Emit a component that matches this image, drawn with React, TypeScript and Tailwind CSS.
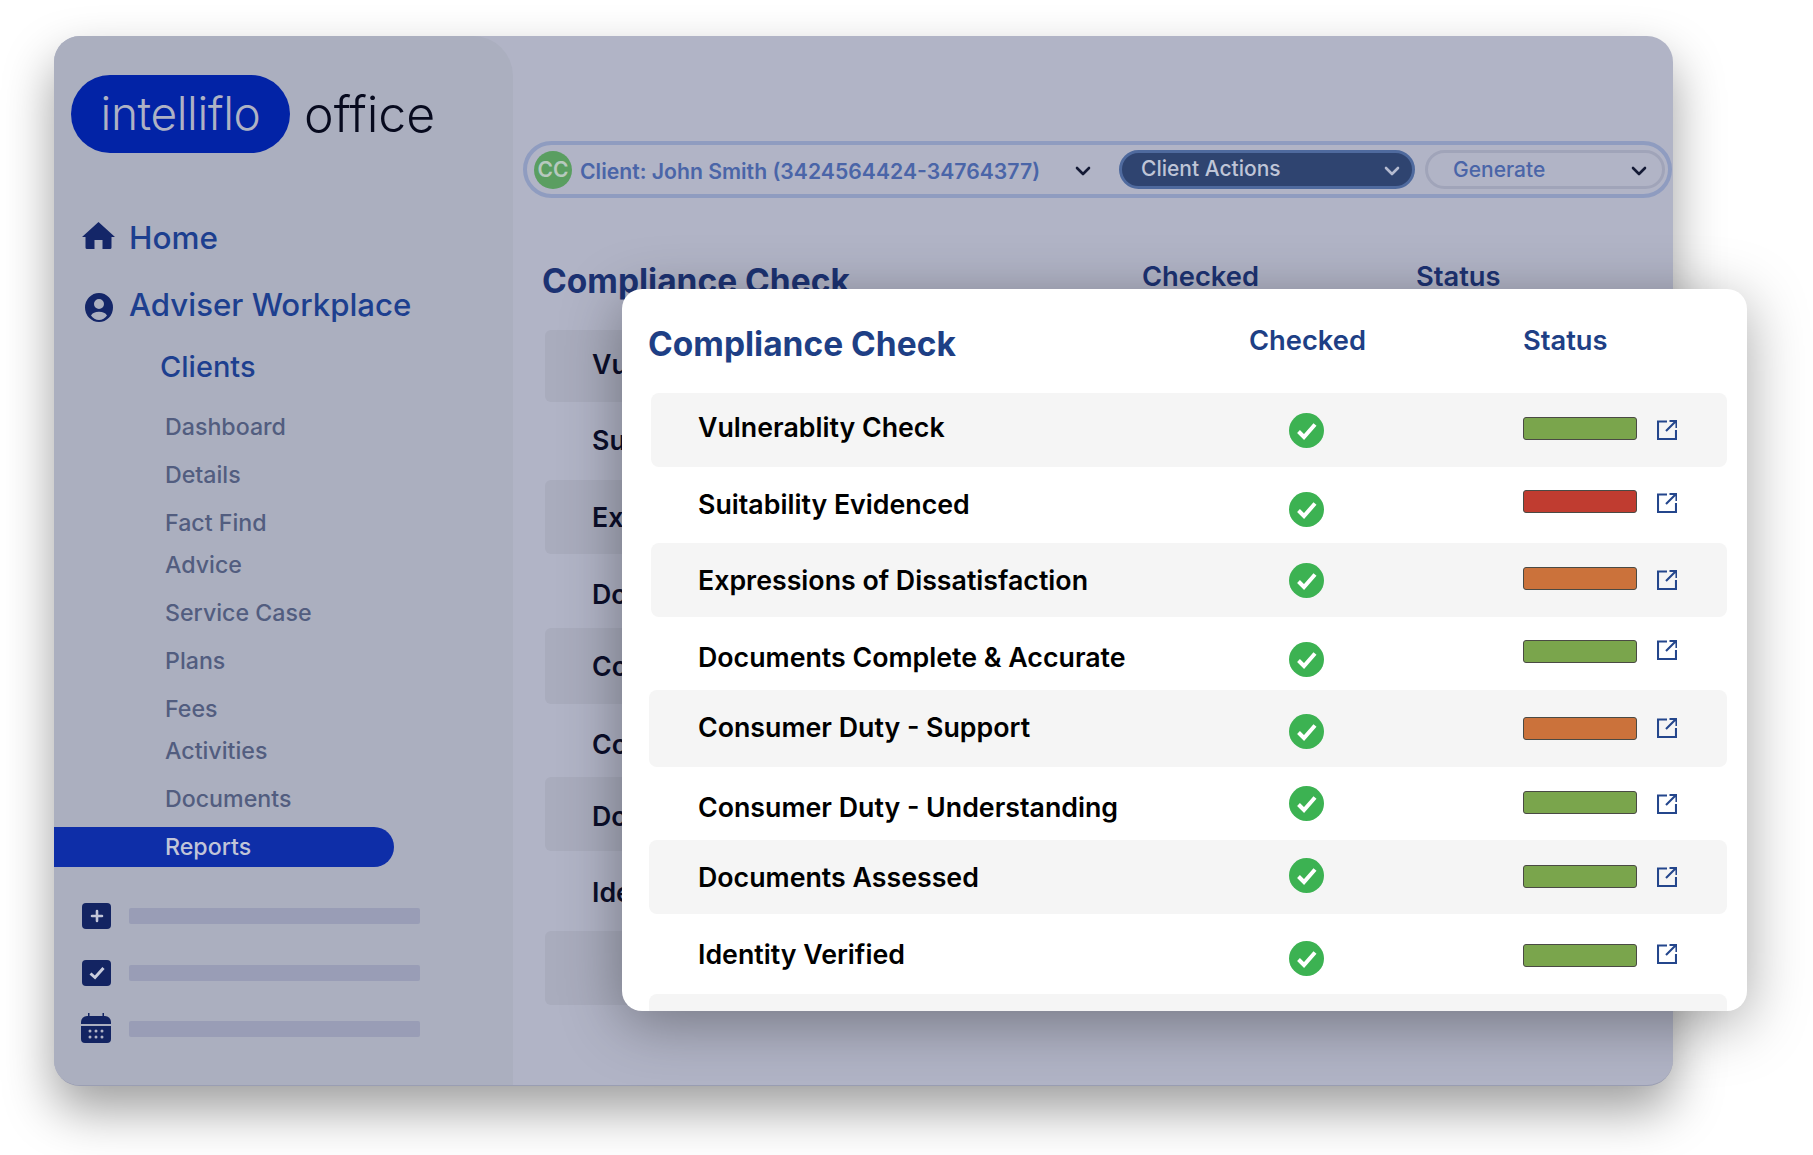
import React from "react";

const font = "font-['Inter',_'Liberation_Sans',_sans-serif]";

function Chevron({ className }: { className: string }) {
  return (
    <svg viewBox="0 0 16 10" className={className} fill="none" stroke="currentColor" strokeWidth="2.6" strokeLinecap="round" strokeLinejoin="round">
      <path d="M2 2l6 6 6-6" />
    </svg>
  );
}

function LinkIcon({ className }: { className: string }) {
  return (
    <svg viewBox="0 0 20 20" className={`w-[20px] h-[20px] shrink-0 text-[#24468c] ${className}`} fill="none" stroke="currentColor" strokeWidth="2.1">
      <path d="M10 1.500H1v17.500h18V10" />
      <path d="M9 11 18.500 1.500M12.500 1h7v7" />
    </svg>
  );
}

function Check({ className }: { className: string }) {
  return (
    <svg viewBox="0 0 35 35" className={`w-[35px] h-[35px] shrink-0 ${className}`}>
      <circle cx="17.5" cy="17.5" r="17.5" fill="#3cb252" />
      <path d="M9.5 18.500l5.500 5.500L26 11.500" fill="none" stroke="#fff" strokeWidth="4" strokeLinecap="butt" strokeLinejoin="miter" />
    </svg>
  );
}

const green = "bg-[#7aa54c]";
const red = "bg-[#c03c30]";
const orange = "bg-[#cb723b]";

const rows = [
  { name: "Vulnerablity Check", h: "h-[74px]", box: "ml-[2px] pl-[47px] bg-[#f5f5f5]", t: "mt-[-5px]", c: "mt-0", b: "mt-[-3px]", i: "mt-0", color: green },
  { name: "Suitability Evidenced", h: "h-[76px]", box: "pl-[49px]", t: "mt-[-1px]", c: "mt-[8px]", b: "mt-[-7px]", i: "mt-[-4px]", color: red },
  { name: "Expressions of Dissatisfaction", h: "h-[74px]", box: "ml-[2px] pl-[47px] bg-[#f5f5f5]", t: "mt-[1px]", c: "mt-0", b: "mt-[-3px]", i: "mt-0", color: orange },
  { name: "Documents Complete & Accurate", h: "h-[73px]", box: "pl-[49px]", t: "mt-[8px]", c: "mt-[11px]", b: "mt-[-4px]", i: "mt-[-7px]", color: green },
  { name: "Consumer Duty - Support", h: "h-[77px]", box: "pl-[49px] bg-[#f5f5f5]", t: "mt-[-2px]", c: "mt-[5px]", b: "mt-0", i: "mt-[-2px]", color: orange },
  { name: "Consumer Duty - Understanding", h: "h-[73px]", box: "pl-[49px]", t: "mt-[8px]", c: "mt-0", b: "mt-[-2px]", i: "mt-0", color: green },
  { name: "Documents Assessed", h: "h-[74px]", box: "pl-[49px] bg-[#f5f5f5]", t: "mt-[1px]", c: "mt-[-4px]", b: "mt-[-2px]", i: "mt-[-1px]", color: green },
  { name: "Identity Verified", h: "h-[80px]", box: "pl-[49px]", t: "mt-[1px]", c: "mt-[8px]", b: "mt-[2px]", i: "mt-0", color: green },
];

const backRows = [
  { label: "Vu", cls: "h-[72px] bg-[#a9acbd] mt-[25px]", shift: "mt-[-4px]" },
  { label: "Su", cls: "h-[78px]", shift: "mt-[-2px]" },
  { label: "Ex", cls: "h-[74px] bg-[#a9acbd]", shift: "mt-0" },
  { label: "Do", cls: "h-[74px]", shift: "mt-[6px]" },
  { label: "Co", cls: "h-[76px] bg-[#a9acbd]", shift: "mt-0" },
  { label: "Co", cls: "h-[73px]", shift: "mt-[8px]" },
  { label: "Do", cls: "h-[74px] bg-[#a9acbd]", shift: "mt-[4px]" },
  { label: "Ide", cls: "h-[80px]", shift: "mt-[2px]" },
  { label: "", cls: "h-[74px] bg-[#a9acbd]", shift: "mt-0" },
];

const subs = [
  { n: "Dashboard", c: "" },
  { n: "Details", c: "" },
  { n: "Fact Find", c: "" },
  { n: "Advice", c: "mt-[-6px]" },
  { n: "Service Case", c: "" },
  { n: "Plans", c: "" },
  { n: "Fees", c: "" },
  { n: "Activities", c: "mt-[-6px]" },
  { n: "Documents", c: "" },
];

export default function App() {
  return (
    <div className={`relative w-[1813px] h-[1155px] overflow-hidden bg-white pl-[54px] pt-[36px] ${font}`}>
      <div className="flex w-[1619px] h-[1050px] rounded-[26px] bg-[#b1b4c6] shadow-[0_24px_50px_rgba(0,0,0,0.38)] overflow-hidden border-b border-[#9a9eb3]">
        <aside className="w-[459px] shrink-0 bg-[#abafbf] rounded-tr-[40px] flex flex-col">
          <div className="flex items-center mt-[39px] ml-[17px]">
            <div className="flex h-[78px] w-[219px] items-center justify-center rounded-full bg-[#0223a6] pb-[2px] text-[#aeb2c4]">
              <span className="text-[46px] font-light tracking-[-0.4px] leading-none">intelliflo</span>
            </div>
            <span className="ml-[14px] text-[50px] font-light leading-none text-[#070a1e]">office</span>
          </div>

          <div className="mt-[61px] flex h-[48px] items-center">
            <svg viewBox="0 0 33 27" className="ml-[28px] mt-[-5px] w-[33px] h-[27px] text-[#142668]" fill="currentColor">
              <path d="M16.500 0 33 15h-3.500v10.500a1.500 1.500 0 0 1-1.500 1.500h-7.500v-9h-8v9H5a1.500 1.500 0 0 1-1.500-1.500V15H0z" />
            </svg>
            <span className="ml-[14px] text-[31.500px] font-medium text-[#1d3f8f]">Home</span>
          </div>
          <div className="mt-[19px] flex h-[48px] items-center">
            <svg viewBox="0 0 28 29" className="ml-[31px] mt-[4px] w-[28px] h-[29px] text-[#142668]" fill="currentColor">
              <path fillRule="evenodd" d="M14 0a14 14.500 0 1 1 0 29a14 14.500 0 0 1 0-29zM14 6a5 5 0 1 0 0 10a5 5 0 0 0 0-10zM6 22.500a9.500 9.500 0 0 0 16 0c-1.500-2.500-4-3.700-8-3.700s-6.500 1.200-8 3.700z" />
            </svg>
            <span className="ml-[16px] text-[31.200px] font-medium text-[#1d3f8f] whitespace-nowrap">Adviser Workplace</span>
          </div>
          <div className="mt-[14px] flex h-[48px] items-center pl-[106px] text-[29px] font-medium text-[#1d3f8f]">Clients</div>

          <div className="mt-[12px] flex flex-col pl-[111px]">
            {subs.map((s) => (
              <div key={s.n} className={`h-[48px] leading-[48px] text-[23.200px] font-medium text-[#525d7f] ${s.c}`}>{s.n}</div>
            ))}
          </div>

          <div className="mt-[4px] flex h-[40px] w-[340px] items-center rounded-r-[20px] bg-[#0e2ea8] pl-[111px] text-[23.200px] font-medium text-[#c1c5d8]">Reports</div>

          <div className="mt-[36px] flex h-[26px] items-center">
            <div className="ml-[28px] flex h-[26px] w-[29px] items-center justify-center rounded-[4px] bg-[#132462]">
              <svg viewBox="0 0 14 14" className="w-[14px] h-[14px]" fill="none" stroke="#c1c5d8" strokeWidth="2.6" strokeLinecap="round">
                <path d="M7 2v10M2 7h10" />
              </svg>
            </div>
            <div className="ml-[18px] h-[16px] w-[291px] rounded-[2px] bg-[#999db6]" />
          </div>
          <div className="mt-[31px] flex h-[26px] items-center">
            <div className="ml-[28px] flex h-[26px] w-[29px] items-center justify-center rounded-[4px] bg-[#132462]">
              <svg viewBox="0 0 16 14" className="w-[16px] h-[14px]" fill="none" stroke="#c9cddd" strokeWidth="3" strokeLinejoin="miter">
                <path d="M1.500 7.500l4.500 4L14.500 2" />
              </svg>
            </div>
            <div className="ml-[18px] h-[16px] w-[291px] rounded-[2px] bg-[#999db6]" />
          </div>
          <div className="mt-[27px] flex h-[30px] items-center">
            <svg viewBox="0 0 30 30" className="ml-[27px] w-[30px] h-[30px] text-[#132462]">
              <path fill="currentColor" d="M7 0h1.500v3h13V0H23v3h1a6 6 0 0 1 6 6v2H0V9a6 6 0 0 1 6-6h1zM0 13h30v13a4 4 0 0 1-4 4H4a4 4 0 0 1-4-4z" />
              <g fill="#b1b4c6">
                <circle cx="9" cy="18" r="1.500" /><circle cx="15" cy="18" r="1.500" /><circle cx="21" cy="18" r="1.500" />
                <circle cx="9" cy="24" r="1.500" /><circle cx="15" cy="24" r="1.500" /><circle cx="21" cy="24" r="1.500" />
              </g>
            </svg>
            <div className="ml-[18px] mt-[2px] h-[16px] w-[291px] rounded-[2px] bg-[#999db6]" />
          </div>
        </aside>

        <main className="flex-1 min-w-0 flex flex-col">
          <div className="mt-[105px] ml-[10px] flex h-[57px] w-[1149px] items-center rounded-full border-[4px] border-[#8f9cc0] pl-[7px]">
            <div className="flex h-[38px] w-[38px] shrink-0 items-center justify-center rounded-full bg-[#5a9e61] text-[21px] font-semibold text-[#b7c9bf]">CC</div>
            <span className="ml-[8px] mt-[5px] w-[495px] shrink-0 text-[21.200px] font-semibold text-[#4a65a8] whitespace-nowrap">Client: John Smith (3424564424-34764377)</span>
            <Chevron className="mt-[2px] w-[16px] h-[10px] text-[#141a35] shrink-0" />
            <div className="ml-[28px] flex h-[39px] w-[296px] shrink-0 items-center justify-between rounded-full border-[3px] border-[#4f6a9e] bg-[#2f4470] pl-[19px] pr-[12px] text-[21px] font-medium text-[#bfc5d7]">
              <span className="mt-[-2px]">Client Actions</span>
              <Chevron className="mt-[2px] w-[16px] h-[10px] text-[#b5bbd0]" />
            </div>
            <div className="ml-[10px] flex h-[39px] w-[240px] shrink-0 items-center justify-between rounded-full border-[3px] border-[#a0a4b9] pl-[25px] pr-[15px] text-[21px] font-medium text-[#4a65a8]">
              <span>Generate</span>
              <Chevron className="mt-[2px] w-[16px] h-[10px] text-[#141a35]" />
            </div>
          </div>

          <div className="mt-[57px] flex h-[50px] items-center pl-[29px] text-[#1c3272]">
            <span className="w-[600px] mt-[2px] text-[33.500px] font-bold">Compliance Check</span>
            <span className="w-[274px] mt-[-6px] text-[27.300px] font-semibold">Checked</span>
            <span className="mt-[-6px] text-[27.300px] font-semibold">Status</span>
          </div>

          <div className="flex flex-col">
            {backRows.map((r, i) => (
              <div key={i} className={`ml-[32px] w-[400px] flex items-center rounded-[6px] text-[26.750px] font-semibold text-[#0b0e2a] ${r.cls}`}>
                <span className={`ml-[47px] ${r.shift}`}>{r.label}</span>
              </div>
            ))}
          </div>
        </main>
      </div>

      <div className="absolute left-[622px] top-[289px] h-[722px] w-[1125px] overflow-hidden rounded-[20px] bg-white pl-[27px] pr-[20px] shadow-[0_12px_60px_rgba(0,0,0,0.35)]">
        <div className="flex h-[104px] items-center text-[#1e3f85]">
          <span className="ml-[-1px] w-[601px] text-[33.500px] font-bold mt-[6px]">Compliance Check</span>
          <span className="w-[274px] text-[27.300px] font-semibold">Checked</span>
          <span className="text-[27.300px] font-semibold">Status</span>
        </div>
        <div className="flex flex-col">
          {rows.map((r) => (
            <div key={r.name} className={`flex items-center rounded-[8px] ${r.h} ${r.box}`}>
              <span className={`w-[591px] shrink-0 text-[26.750px] font-semibold text-black whitespace-nowrap ${r.t}`}>{r.name}</span>
              <Check className={r.c} />
              <div className={`ml-[199px] h-[23px] w-[114px] shrink-0 rounded-[3px] border border-[#4a4a44] ${r.color} ${r.b}`} />
              <LinkIcon className={`ml-[20px] ${r.i}`} />
            </div>
          ))}
          <div className="h-[74px] rounded-[8px] bg-[#f5f5f5]" />
        </div>
      </div>
    </div>
  );
}
